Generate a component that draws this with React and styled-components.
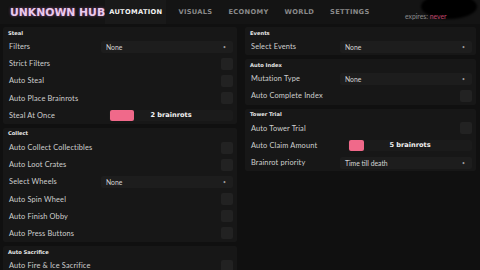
import styled, { createGlobalStyle } from "styled-components";

const GlobalStyle = createGlobalStyle`
  html, body {
    margin: 0;
    padding: 0;
    background: #0f0f0f;
    width: 480px;
    height: 270px;
    overflow: hidden;
  }
  * {
    box-sizing: border-box;
  }
`;

const tabs = ["AUTOMATION", "VISUALS", "ECONOMY", "WORLD", "SETTINGS"];

const leftSections = [
  {
    title: "Steal",
    rows: [
      { label: "Filters", kind: "select", value: "None" },
      { label: "Strict Filters", kind: "toggle" },
      { label: "Auto Steal", kind: "toggle" },
      { label: "Auto Place Brainrots", kind: "toggle" },
      { label: "Steal At Once", kind: "slider", value: "2 brainrots", fill: 24 },
    ],
  },
  {
    title: "Collect",
    rows: [
      { label: "Auto Collect Collectibles", kind: "toggle" },
      { label: "Auto Loot Crates", kind: "toggle" },
      { label: "Select Wheels", kind: "select", value: "None" },
      { label: "Auto Spin Wheel", kind: "toggle" },
      { label: "Auto Finish Obby", kind: "toggle" },
      { label: "Auto Press Buttons", kind: "toggle" },
    ],
  },
  {
    title: "Auto Sacrifice",
    rows: [{ label: "Auto Fire & Ice Sacrifice", kind: "toggle" }],
  },
];

const rightSections = [
  {
    title: "Events",
    rows: [{ label: "Select Events", kind: "select", value: "None" }],
  },
  {
    title: "Auto Index",
    rows: [
      { label: "Mutation Type", kind: "select", value: "None" },
      { label: "Auto Complete Index", kind: "toggle" },
    ],
  },
  {
    title: "Tower Trial",
    rows: [
      { label: "Auto Tower Trial", kind: "toggle" },
      { label: "Auto Claim Amount", kind: "slider", value: "5 brainrots", fill: 15 },
      { label: "Brainrot priority", kind: "select", value: "Time till death" },
    ],
  },
];

const Control = ({ row }) => {
  if (row.kind === "select") {
    return (
      <Select>
        <span>{row.value}</span>
        <Chevron>•</Chevron>
      </Select>
    );
  }
  if (row.kind === "slider") {
    return (
      <Slider>
        <SliderFill style={{ width: row.fill }} />
        <SliderText>{row.value}</SliderText>
      </Slider>
    );
  }
  return <Toggle />;
};

const Column = ({ sections }) => (
  <ColumnWrap>
    {sections.map((section) => (
      <Section key={section.title}>
        <SectionTitle>{section.title}</SectionTitle>
        {section.rows.map((row) => (
          <Row key={row.label}>
            <Label>{row.label}</Label>
            <Control row={row} />
          </Row>
        ))}
      </Section>
    ))}
  </ColumnWrap>
);

export default function App() {
  return (
    <>
      <GlobalStyle />
      <Window>
        <Header>
          <Title>UNKNOWN HUB</Title>
          <Tabs>
            {tabs.map((tab, i) => (
              <Tab key={tab} active={i === 0}>
                {tab}
              </Tab>
            ))}
          </Tabs>
          <Account>
            <Blob />
            <Expires>
              expires: <Never>never</Never>
            </Expires>
          </Account>
        </Header>
        <Body>
          <Column sections={leftSections} />
          <Column sections={rightSections} />
        </Body>
      </Window>
    </>
  );
}

const Window = styled.div`
  width: 480px;
  height: 270px;
  background: #101010;
  font-family: "Lato", "Open Sans", sans-serif;
  overflow: hidden;
`;

const Header = styled.div`
  height: 24px;
  display: flex;
  align-items: center;
  padding-left: 10px;
  background: #141414;
`;

const Title = styled.div`
  font-family: "DejaVu Sans", sans-serif;
  font-weight: bold;
  font-size: 10.8px;
  color: #ebc9ee;
  text-shadow: 0 0 3px rgba(220, 120, 210, 0.55);
  margin-top: 1px;
`;

const Tabs = styled.div`
  display: flex;
  align-items: center;
  gap: 8px;
  height: 100%;
`;

const Tab = styled.div`
  font-family: "DejaVu Sans", sans-serif;
  font-weight: bold;
  font-size: 6.7px;
  letter-spacing: 0.3px;
  height: 100%;
  display: flex;
  align-items: center;
  padding: 0 4px;
  color: ${(p) => (p.active ? "#f2f2f2" : "#8a8a8a")};
  background: ${(p) => (p.active ? "#191919" : "transparent")};
`;

const Account = styled.div`
  margin-left: auto;
  width: 75px;
  height: 100%;
  position: relative;
`;

const Blob = styled.div`
  position: absolute;
  left: 16px;
  top: -6px;
  width: 56px;
  height: 25px;
  border-radius: 50%;
  background: #000;
  filter: blur(1px);
`;

const Expires = styled.div`
  position: absolute;
  left: 0;
  top: 12px;
  font-family: "Lato", sans-serif;
  font-size: 6.8px;
  color: #8c8c8c;
`;

const Never = styled.span`
  color: #c0456a;
`;

const Body = styled.div`
  display: grid;
  grid-template-columns: 234px 231px;
  gap: 8px;
  padding: 3px 0 0 3px;
`;

const ColumnWrap = styled.div`
  display: flex;
  flex-direction: column;
  gap: 4px;
`;

const Section = styled.div`
  background: #171717;
  border-radius: 2px;
  display: flex;
  flex-direction: column;
`;

const SectionTitle = styled.div`
  height: 11px;
  display: flex;
  align-items: center;
  padding-left: 5px;
  font-family: "DejaVu Sans", sans-serif;
  font-weight: bold;
  font-size: 5.2px;
  color: #e8e8e8;
`;

const Row = styled.div`
  height: 17.2px;
  display: flex;
  align-items: center;
  justify-content: space-between;
  padding: 0 4px 0 6px;
`;

const Label = styled.div`
  font-size: 7.4px;
  color: #cfcfcf;
  letter-spacing: 0.15px;
`;

const Select = styled.div`
  width: 132px;
  height: 12px;
  background: #1d1d1d;
  border-radius: 2px;
  display: flex;
  align-items: center;
  justify-content: space-between;
  padding: 0 7px 0 5px;
  font-size: 6.8px;
  color: #d6d6d6;
`;

const Chevron = styled.span`
  font-size: 5px;
  color: #9a9a9a;
`;

const Toggle = styled.div`
  width: 12px;
  height: 12px;
  border-radius: 2px;
  background: #222222;
`;

const Slider = styled.div`
  width: 124px;
  height: 11px;
  border-radius: 2px;
  background: #1b1b1b;
  position: relative;
  display: flex;
  align-items: center;
  justify-content: center;
`;

const SliderFill = styled.div`
  position: absolute;
  left: 1px;
  top: 0;
  bottom: 0;
  border-radius: 2px;
  background: #f0698a;
`;

const SliderText = styled.span`
  font-family: "DejaVu Sans", sans-serif;
  font-weight: bold;
  font-size: 6.6px;
  color: #f2f2f2;
  position: relative;
`;
